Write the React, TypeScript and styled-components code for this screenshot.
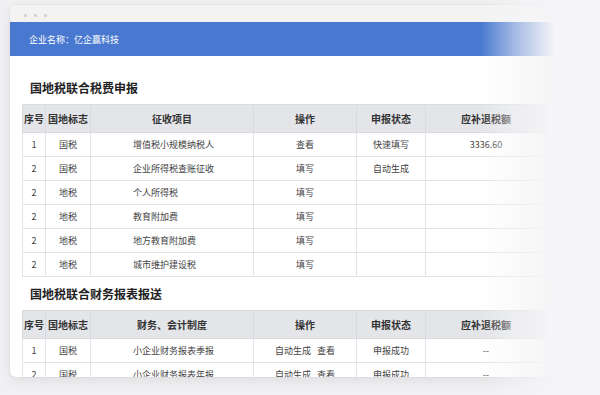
import styled, { createGlobalStyle } from "styled-components"

const GlobalStyle = createGlobalStyle`
  html, body {
    margin: 0;
    padding: 0;
    background: #f1f1f3;
    overflow: hidden;
  }
  body {
    font-family: "Noto Sans CJK SC", "Noto Sans", sans-serif;
    color: #333;
  }
`

const Page = styled.div`
  position: relative;
  width: 600px;
  height: 395px;
  padding: 5px 0 0 10px;
  box-sizing: border-box;
  overflow: hidden;
`

const Window = styled.div`
  width: 620px;
  height: 372px;
  background: #fff;
  border-radius: 6px;
  overflow: hidden;
  box-shadow: 0 4px 14px rgba(0, 0, 0, 0.08), 0 0 0 1px rgba(0, 0, 0, 0.03);
`

const Chrome = styled.div`
  height: 17px;
  background: #f3f3f4;
  display: flex;
  gap: 7px;
  padding: 9px 0 0 14px;
  box-sizing: border-box;
`

const Dot = styled.span`
  width: 3px;
  height: 3px;
  border-radius: 50%;
  background: #cfcfd2;
`

const Banner = styled.div`
  height: 34px;
  background: #4878cf;
  color: #fff;
  font-size: 9px;
  display: flex;
  align-items: center;
  padding-left: 19px;
`

const Content = styled.div`
  padding: 0 12px;
`

const Title = styled.h2<{ top: number }>`
  margin: ${(p) => p.top}px 0 8px 8px;
  font-size: 12px;
  line-height: 16px;
  font-weight: 700;
  color: #222;
`

const Table = styled.table`
  border-collapse: collapse;
  table-layout: fixed;
  width: 518px;
  font-size: 9px;
`

const Th = styled.th<{ w: number }>`
  width: ${(p) => p.w}px;
  height: 27px;
  padding: 0;
  background: #e3e5e9;
  border: 1px solid #d9dbdf;
  font-size: 10px;
  font-weight: 700;
  color: #333;
  text-align: center;
`

const Td = styled.td<{ left?: boolean }>`
  height: 23px;
  padding: 0 0 0 ${(p) => (p.left ? "42px" : "0")};
  border: 1px solid #e2e3e6;
  text-align: ${(p) => (p.left ? "left" : "center")};
  color: #444;
  white-space: nowrap;
`

const Fade = styled.div`
  position: absolute;
  top: 0;
  right: 0;
  width: 120px;
  height: 100%;
  background: linear-gradient(
    to right,
    rgba(245, 245, 247, 0) 0%,
    rgba(245, 245, 247, 0.55) 30%,
    rgba(245, 245, 247, 1) 62%
  );
  pointer-events: none;
`

const cols = [22, 44, 162, 102, 68, 120]

type Row = string[]

const taxRows: Row[] = [
  ["1", "国税", "增值税小规模纳税人", "查看", "快速填写", "3336.60"],
  ["2", "国税", "企业所得税查账征收", "填写", "自动生成", ""],
  ["2", "地税", "个人所得税", "填写", "", ""],
  ["2", "地税", "教育附加费", "填写", "", ""],
  ["2", "地税", "地方教育附加费", "填写", "", ""],
  ["2", "地税", "城市维护建设税", "填写", "", ""],
]

const reportRows: Row[] = [
  ["1", "国税", "小企业财务报表季报", "自动生成\u00a0\u00a0\u00a0查看", "申报成功", "--"],
  ["2", "国税", "小企业财务报表年报", "自动生成\u00a0\u00a0\u00a0查看", "申报成功", "--"],
]

const DataTable = ({ item, rows }: { item: string; rows: Row[] }) => {
  const heads = ["序号", "国地标志", item, "操作", "申报状态", "应补退税额"]
  return (
    <Table>
      <thead>
        <tr>
          {heads.map((h, i) => (
            <Th key={h} w={cols[i]}>
              {h}
            </Th>
          ))}
        </tr>
      </thead>
      <tbody>
        {rows.map((r, ri) => (
          <tr key={ri}>
            {r.map((c, ci) => (
              <Td key={ci} left={ci === 2}>
                {c}
              </Td>
            ))}
          </tr>
        ))}
      </tbody>
    </Table>
  )
}

const App = () => (
  <Page>
    <GlobalStyle />
    <Window>
      <Chrome>
        <Dot />
        <Dot />
        <Dot />
      </Chrome>
      <Banner>企业名称：亿企赢科技</Banner>
      <Content>
        <Title top={24}>国地税联合税费申报</Title>
        <DataTable item="征收项目" rows={taxRows} />
        <Title top={9}>国地税联合财务报表报送</Title>
        <DataTable item="财务、会计制度" rows={reportRows} />
      </Content>
    </Window>
    <Fade />
  </Page>
)

export default App
